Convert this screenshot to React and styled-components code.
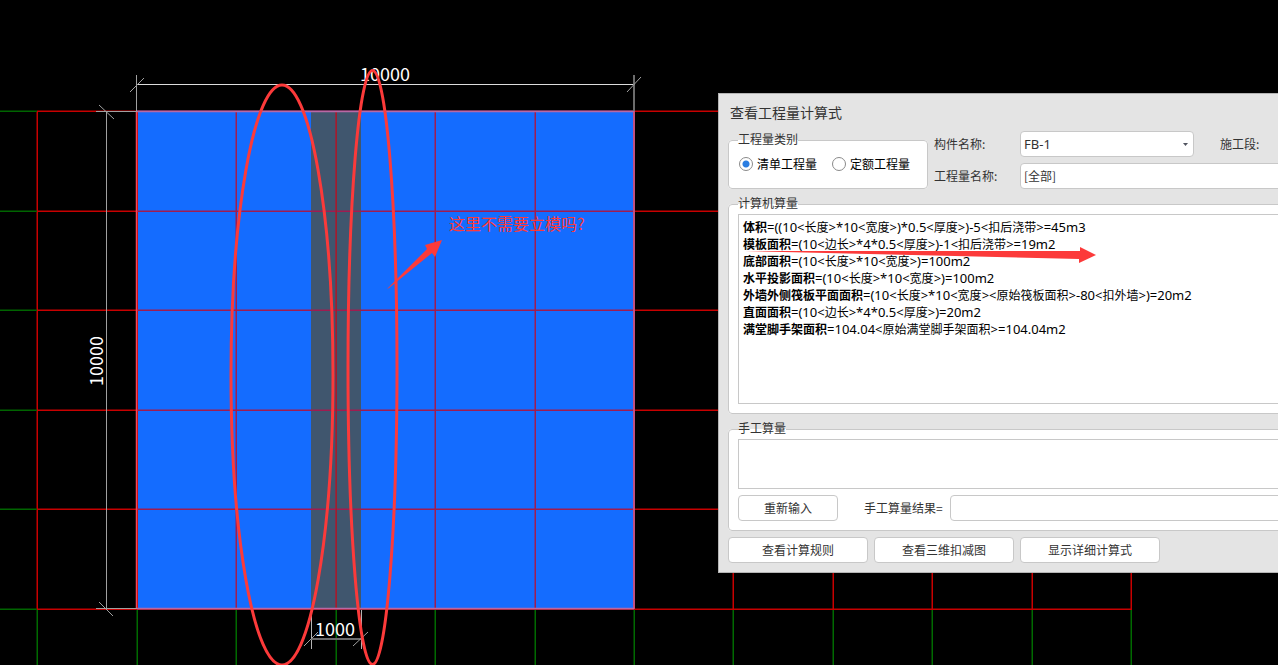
import React from "react";
import styled, { createGlobalStyle } from "styled-components";

const GlobalStyle = createGlobalStyle`
  * {
    box-sizing: border-box;
  }
  body {
    margin: 0;
    background: #000;
    font-family: "Noto Sans CJK SC", sans-serif;
    font-size: 12px;
    color: #333;
  }
`;

const Workspace = styled.main`
  position: relative;
  min-height: 100vh;
  background: #000;
  overflow: hidden;
`;
const Layer = styled.svg`
  position: absolute;
  inset: 0;
  width: 100%;
  height: 100%;
  pointer-events: none;
`;
const DimText = styled.text`
  font-family: "Noto Sans CJK SC", sans-serif;
  font-size: 18px;
  fill: #fff;
  text-anchor: middle;
`;
const NoteText = styled.text`
  font-family: "Noto Sans CJK SC", sans-serif;
  font-size: 16px;
  fill: #fc3a3a;
`;

const Dialog = styled.section`
  position: absolute;
  top: 93px;
  left: 718px;
  right: -40px;
  display: flex;
  flex-direction: column;
  gap: 6px;
  padding: 0 9px 9px;
  background: #e4e4e4;
  border: 1px solid #b4b4b4;
`;
const Title = styled.h1`
  margin: 0 0 -6px;
  padding-left: 2px;
  font-size: 14px;
  font-weight: normal;
  line-height: 37px;
`;
const Filters = styled.div`
  display: grid;
  grid-template-columns: 200px 1fr;
  gap: 6px;
`;
const Fields = styled.div`
  display: grid;
  grid-template-columns: 80px 174px 1fr;
  grid-auto-rows: 26px;
  gap: 6px;
  align-items: center;
`;
const FieldLabel = styled.label`
  line-height: 26px;
  padding-left: ${(props) => (props.$indent ? "20px" : "0")};
`;
const Group = styled.fieldset`
  margin: 0;
  min-width: 0;
  padding: 0 9px 9px;
  background: #fff;
  border: 1px solid #c8c8c8;
  border-radius: 4px;
`;
const Legend = styled.legend`
  padding: 0 0 3px;
  line-height: 16px;
`;
const Radios = styled.div`
  display: flex;
  gap: 15px;
  padding-left: 1px;
  line-height: 28px;
  margin-bottom: -9px;
`;
const RadioLabel = styled.label`
  display: flex;
  align-items: center;
  gap: 4px;
  color: #000;
`;
const Radio = styled.input`
  appearance: none;
  width: 14px;
  height: 14px;
  margin: 0;
  border: 1px solid #8a8a8a;
  border-radius: 50%;
  background: #fff;
  &:checked {
    background: radial-gradient(circle, #2a7de1 3px, #fff 4px);
  }
`;
const SelectWrapper = styled.div`
  position: relative;
  svg {
    position: absolute;
    right: 6px;
    top: 12px;
    pointer-events: none;
  }
`;
const Select = styled.select`
  appearance: none;
  display: block;
  width: 100%;
  height: 26px;
  padding: 0 3px;
  font-family: "Noto Sans", sans-serif;
  font-size: 13px;
  color: #333;
  background: #fff;
  border: 1px solid #c8c8c8;
  border-radius: 4px;
`;
const TextInput = styled.input`
  width: 100%;
  height: 26px;
  padding: 0 3px 2px;
  font: inherit;
  color: #333;
  background: #fff;
  border: 1px solid #c8c8c8;
  border-radius: 4px;
  grid-column: ${(props) => (props.$wide ? "2 / -1" : "auto")};
`;
const Results = styled.div`
  min-height: 190px;
  padding: 3px 4px;
  color: #000;
  border: 1px solid #c8c8c8;
`;
const Formula = styled.p`
  margin: 0;
  height: 17px;
  font-family: "Noto Sans", sans-serif;
  font-size: 13px;
  line-height: 17px;
  white-space: nowrap;
`;
const Name = styled.strong`
  font-family: "Noto Sans CJK SC", sans-serif;
  font-size: 12px;
  font-weight: bold;
`;
const Han = styled.span`
  font-family: "Noto Sans CJK SC", sans-serif;
  font-size: 12px;
`;
const ManualText = styled.textarea`
  display: block;
  width: 100%;
  height: 50px;
  padding: 4px;
  font: inherit;
  resize: none;
  border: 1px solid #c8c8c8;
`;
const ManualRow = styled.div`
  display: flex;
  align-items: center;
  gap: 26px;
  margin-top: 6px;
`;
const ManualResult = styled.div`
  display: grid;
  grid-template-columns: 80px 1fr;
  gap: 6px;
  align-items: center;
  flex: 1;
  label {
    padding-bottom: 2px;
    white-space: nowrap;
  }
`;
const ButtonRow = styled.div`
  display: flex;
  gap: 6px;
`;
const Button = styled.button`
  width: ${(props) => (props.$small ? "100px" : "140px")};
  height: 26px;
  flex-shrink: 0;
  padding: 0 0 2px;
  font: inherit;
  color: #333;
  background: #fff;
  border: 1px solid #c8c8c8;
  border-radius: 4px;
`;

const columns = [37, 137, 236, 336, 435, 535, 634, 733, 833, 932, 1032, 1131];
const rows = [111, 211, 310, 410, 509, 609];

const formulas = [
  ["体积", "=((10<长度>*10<宽度>)*0.5<厚度>)-5<扣后浇带>=45m3"],
  ["模板面积", "=(10<边长>*4*0.5<厚度>)-1<扣后浇带>=19m2"],
  ["底部面积", "=(10<长度>*10<宽度>)=100m2"],
  ["水平投影面积", "=(10<长度>*10<宽度>)=100m2"],
  ["外墙外侧筏板平面面积", "=(10<长度>*10<宽度><原始筏板面积>-80<扣外墙>)=20m2"],
  ["直面面积", "=(10<边长>*4*0.5<厚度>)=20m2"],
  ["满堂脚手架面积", "=104.04<原始满堂脚手架面积>=104.04m2"],
];

function Expression({ text }) {
  return text
    .split(/([\u4e00-\u9fff]+)/)
    .map((part, i) => (i % 2 ? <Han key={i}>{part}</Han> : part));
}

function Drawing() {
  return (
    <Layer>
      <rect x="136" y="110" width="499" height="500" fill="#24344f" />
      <rect x="137" y="111" width="497" height="498" fill="#146cff" />
      <rect x="311" y="111" width="50" height="498" fill="#40566e" />
      {/* axis grid */}
      <g strokeWidth="1.5">
        {columns.map((x) => (
          <g key={x}>
            <path d={`M${x + 0.25} 609V2000`} stroke="#006a00" />
            <path
              d={`M${x + 0.25} 111V609`}
              stroke={x > 137 && x < 634 ? "#a01c50" : "#c80000"}
            />
          </g>
        ))}
        {rows.map((y) => (
          <g key={y}>
            <path d={`M0 ${y + 0.25}H37`} stroke="#006400" />
            <path d={`M37 ${y + 0.25}H137M634 ${y + 0.25}H1132`} stroke="#c80000" />
            <path d={`M137 ${y + 0.25}H634`} stroke="#a01c50" />
          </g>
        ))}
        <path d="M336.25 111V609" stroke="#a01e2c" />
        <path d="M136.5 111V609" stroke="#f0485c" />
        <path d="M634 111V609" stroke="#c05080" strokeWidth="2" />
        <path d="M137 111.5H634M137 608.5H634" stroke="#b868a4" />
        <path d="M137 609.5H634" stroke="#b03050" strokeWidth="1" />
      </g>
      {/* dimensions */}
      <g fill="none" stroke="#a0a0a0">
        <path d="M136 84.5H634" stroke="#dcdcdc" />
        <path d="M136.5 75V111M106.5 111V609M96 111.5H137M96 608.5H137" />
        <path d="M311.5 610V649M361.5 610V649" stroke="#b4b4b4" />
        <path d="M634 75V111M311 639H361" stroke="#6c6c6c" strokeWidth="2" />
        <path d="M130 92L144 78M627 92L641 77M99 105L114 119M99 602L113 616M304 646L318 632M353 646L368 632" />
      </g>
      <DimText x="385" y="81">10000</DimText>
      <DimText x="335" y="636">1000</DimText>
      <DimText transform="translate(103 361) rotate(-90)">10000</DimText>
    </Layer>
  );
}

function Markup() {
  return (
    <Layer>
      <g fill="none" stroke="#fc3a3a" strokeWidth="3">
        <ellipse cx="282" cy="375" rx="51" ry="290" />
        <ellipse cx="372.5" cy="367.5" rx="24.5" ry="297" />
      </g>
      <g fill="#fc3a3a">
        <path d="M387 289L427 249L425 245L442 240L435 257L432 253L389 288Z" />
        <path d="M745 251H1080V247L1096 255L1079 263V259Z" />
      </g>
      <NoteText x="449" y="230">
        这里不需要立模吗?
      </NoteText>
    </Layer>
  );
}

export default function App() {
  return (
    <Workspace>
      <GlobalStyle />
      <Drawing />
      <Dialog>
        <Title>查看工程量计算式</Title>
        <Filters>
          <Group>
            <Legend>工程量类别</Legend>
            <Radios>
              <RadioLabel>
                <Radio type="radio" name="kind" defaultChecked />
                清单工程量
              </RadioLabel>
              <RadioLabel>
                <Radio type="radio" name="kind" />
                定额工程量
              </RadioLabel>
            </Radios>
          </Group>
          <Fields>
            <FieldLabel htmlFor="component">构件名称:</FieldLabel>
            <SelectWrapper>
              <Select id="component">
                <option>FB-1</option>
              </Select>
              <svg width="5" height="3">
                <path d="M0 0H5L2.5 3Z" fill="#50545f" />
              </svg>
            </SelectWrapper>
            <FieldLabel as="span" $indent>
              施工段:
            </FieldLabel>
            <FieldLabel htmlFor="quantity">工程量名称:</FieldLabel>
            <TextInput id="quantity" defaultValue="[全部]" $wide />
          </Fields>
        </Filters>
        <Group>
          <Legend>计算机算量</Legend>
          <Results>
            {formulas.map(([name, text]) => (
              <Formula key={name}>
                <Name>{name}</Name>
                <Expression text={text} />
              </Formula>
            ))}
          </Results>
        </Group>
        <Group>
          <Legend>手工算量</Legend>
          <ManualText aria-label="手工算量" />
          <ManualRow>
            <Button $small>重新输入</Button>
            <ManualResult>
              <label htmlFor="result">手工算量结果=</label>
              <TextInput id="result" />
            </ManualResult>
          </ManualRow>
        </Group>
        <ButtonRow>
          <Button>查看计算规则</Button>
          <Button>查看三维扣减图</Button>
          <Button>显示详细计算式</Button>
        </ButtonRow>
      </Dialog>
      <Markup />
    </Workspace>
  );
}
